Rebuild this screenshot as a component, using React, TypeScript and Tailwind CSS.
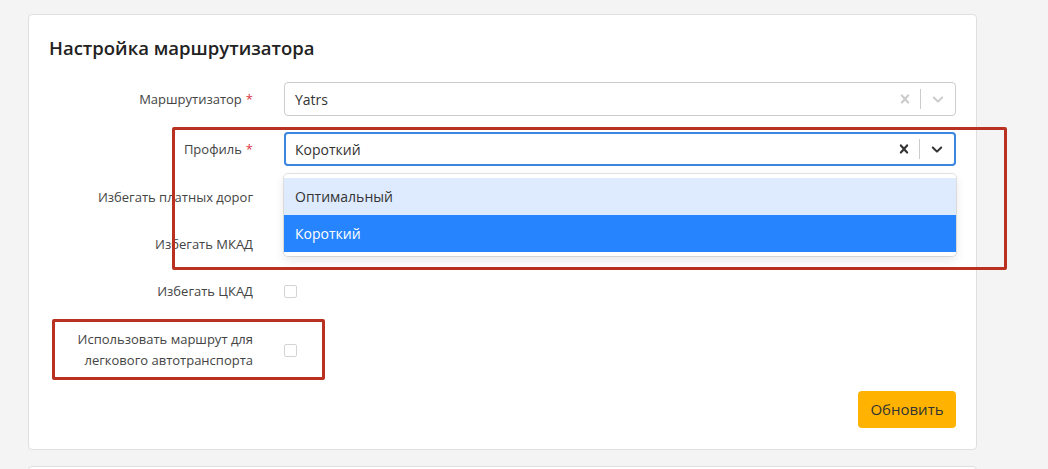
import React from 'react';

const font = { fontFamily: '"Open Sans", "Noto Sans", sans-serif' };

function Cross({ dark }: { dark?: boolean }) {
	return (
		<svg viewBox="0 0 20 20" width="18" height="18" className={dark ? 'fill-[#333]' : 'fill-[#cccccc]'}>
			<path d="M14.348 14.849c-0.469 0.469-1.229 0.469-1.697 0l-2.651-3.030-2.651 3.029c-0.469 0.469-1.229 0.469-1.697 0-0.469-0.469-0.469-1.229 0-1.697l2.758-3.15-2.759-3.152c-0.469-0.469-0.469-1.228 0-1.697s1.228-0.469 1.697 0l2.652 3.031 2.651-3.031c0.469-0.469 1.228-0.469 1.697 0s0.469 1.229 0 1.697l-2.758 3.152 2.758 3.15c0.469 0.469 0.469 1.229 0 1.698z" />
		</svg>
	);
}

function Chevron({ dark }: { dark?: boolean }) {
	return (
		<svg viewBox="0 0 20 20" width="18" height="18" className={dark ? 'fill-[#333]' : 'fill-[#cccccc]'}>
			<path d="M4.516 7.548c0.436-0.446 1.043-0.481 1.576 0l3.908 3.747 3.908-3.747c0.533-0.481 1.141-0.446 1.574 0 0.436 0.445 0.408 1.197 0 1.615-0.406 0.418-4.695 4.502-4.695 4.502-0.217 0.223-0.502 0.335-0.787 0.335s-0.57-0.112-0.789-0.335c0 0-4.287-4.084-4.695-4.502s-0.436-1.17 0-1.615z" />
		</svg>
	);
}

function Select({ value, focused }: { value: string; focused?: boolean }) {
	return (
		<div
			className={
				'flex h-[34px] items-center rounded-[4px] bg-white ' +
				(focused ? 'border-2 border-[#3b86e0]' : 'border border-[#cccccc]')
			}
		>
			<div className={'flex-1 text-[14px] text-[#333] ' + (focused ? 'pl-[9px]' : 'pl-[10px]')}>{value}</div>
			<div className="flex w-[30px] justify-center">
				<Cross dark={focused} />
			</div>
			<div className="h-[20px] w-px bg-[#cccccc]" />
			<div className="flex w-[34px] justify-center">
				<Chevron dark={focused} />
			</div>
		</div>
	);
}

function Label({ children, required }: { children: React.ReactNode; required?: boolean }) {
	return (
		<div className="w-[205px] shrink-0 pr-px text-right text-[13px] leading-[21px] text-[#444]">
			{children}
			{required && <span className="ml-1 text-[#dc3545]">*</span>}
		</div>
	);
}

function Check() {
	return <div className="h-[13px] w-[13px] rounded-[2px] border border-[#d4d4d4] bg-white" />;
}

export default function App() {
	return (
		<div className="relative h-[469px] overflow-hidden bg-[#f4f4f4] pl-[28px] pt-[14px]" style={font}>
			<div className="w-[949px] rounded-[4px] border border-[#dfdfdf] bg-white px-[20px] pb-[21px] pt-[19px]">
				<h2 className="text-[18.5px] font-semibold leading-[28px] text-[#222]">Настройка маршрутизатора</h2>

				<div className="mt-[20px] flex flex-col">
					<div className="flex items-center gap-[30px]">
						<Label required>Маршрутизатор</Label>
						<div className="flex-1">
							<Select value="Yatrs" />
						</div>
					</div>

					<div className="mt-[16px] flex items-center gap-[30px]">
						<Label required>Профиль</Label>
						<div className="relative flex-1">
							<Select value="Короткий" focused />
							{/* открытое меню */}
							<div className="absolute left-0 right-0 top-[42px] z-10 rounded-[4px] bg-white py-[4px] shadow-[0_0_0_1px_rgba(0,0,0,0.1),0_4px_11px_rgba(0,0,0,0.1)]">
								<div className="bg-[#deebff] px-[11px] py-[8px] text-[14px] leading-[21px] text-[#333]">Оптимальный</div>
								<div className="bg-[#2684ff] px-[11px] py-[8px] text-[14px] leading-[21px] text-white">Короткий</div>
							</div>
						</div>
					</div>

					<div className="mt-[16px] flex h-[31px] items-center gap-[30px]">
						<Label>Избегать платных дорог</Label>
						<Check />
					</div>
					<div className="mt-[16px] flex h-[31px] items-center gap-[30px]">
						<Label>Избегать МКАД</Label>
						<Check />
					</div>
					<div className="mt-[16px] flex h-[31px] items-center gap-[30px]">
						<Label>Избегать ЦКАД</Label>
						<Check />
					</div>
					<div className="mt-[22px] flex items-center gap-[30px]">
						<Label>
							Использовать маршрут для
							<br />
							легкового автотранспорта
						</Label>
						<Check />
					</div>
				</div>

				<div className="mt-[20px] flex justify-end">
					<button className="h-[37px] w-[98px] rounded-[4px] bg-[#ffb300] text-[15px] text-[#333]">Обновить</button>
				</div>
			</div>

			<div className="mt-[16px] h-[40px] w-[949px] rounded-[4px] border border-[#dfdfdf] bg-white" />

			{/* красные рамки-аннотации */}
			<div className="pointer-events-none absolute left-[172px] top-[127px] h-[143px] w-[835px] rounded-[2px] border-[3px] border-[#b93120]" />
			<div className="pointer-events-none absolute left-[52px] top-[319px] h-[61px] w-[273px] rounded-[2px] border-[3px] border-[#b93120]" />
		</div>
	);
}
